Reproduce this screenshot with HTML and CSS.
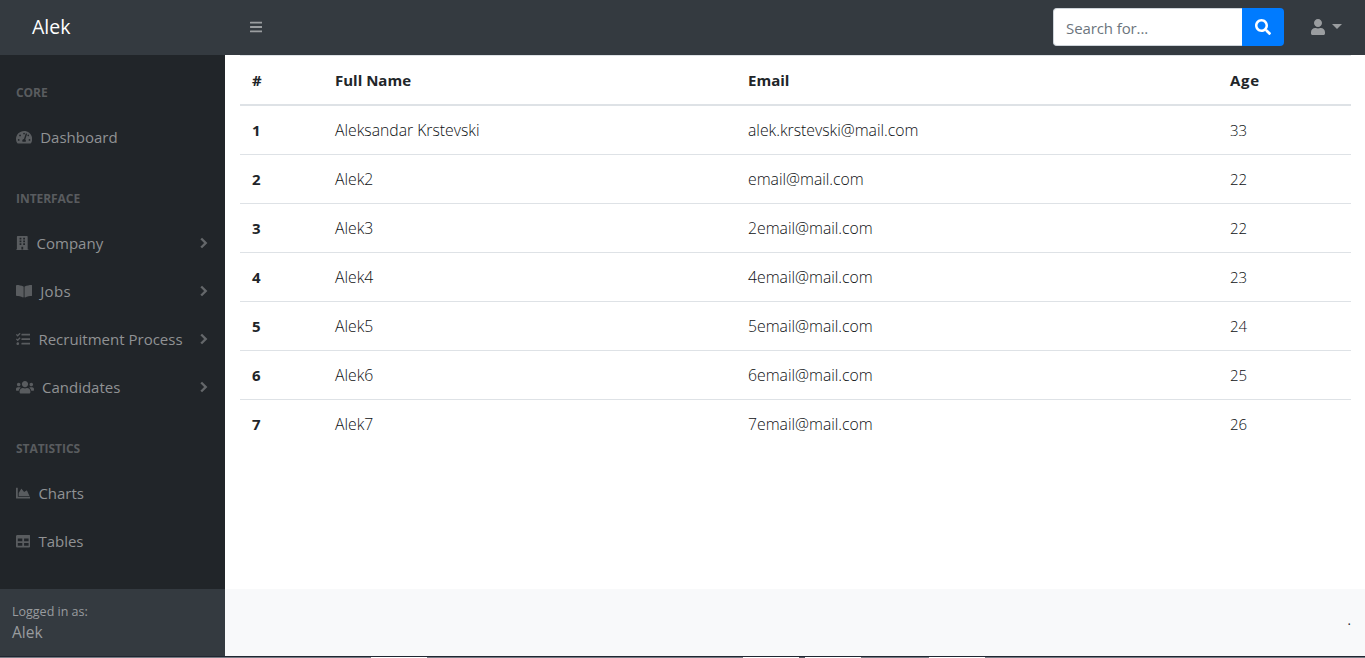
FILE: index.html
```html
<!DOCTYPE html>
<html lang="en">
<head>
<meta charset="utf-8">
<title>Alek</title>
<link rel="stylesheet" href="styles.css">
</head>
<body>
<nav class="topbar">
  <a class="brand">Alek</a>
  <button class="toggle" aria-label="Toggle sidebar"><svg class="icon" viewBox="0 0 448 512"><path d="M16 132h416c8.837 0 16-7.163 16-16V76c0-8.837-7.163-16-16-16H16C7.163 60 0 67.163 0 76v40c0 8.837 7.163 16 16 16zm0 160h416c8.837 0 16-7.163 16-16v-40c0-8.837-7.163-16-16-16H16c-8.837 0-16 7.163-16 16v40c0 8.837 7.163 16 16 16zm0 160h416c8.837 0 16-7.163 16-16v-40c0-8.837-7.163-16-16-16H16c-8.837 0-16 7.163-16 16v40c0 8.837 7.163 16 16 16z"/></svg></button>
  <form class="search">
    <div class="search-input"><span class="search-text">Search for...</span></div>
    <button type="button" class="search-button" aria-label="Search"><svg class="icon" viewBox="0 0 512 512"><path d="M505 442.700L405.300 343c-4.500-4.500-10.600-7-17-7H372c27.600-35.300 44-79.700 44-128C416 93.100 322.900 0 208 0S0 93.100 0 208s93.100 208 208 208c48.300 0 92.700-16.400 128-44v16.300c0 6.400 2.500 12.500 7 17l99.700 99.700c9.400 9.400 24.600 9.400 33.900 0l28.300-28.300c9.400-9.400 9.400-24.600.1-34zM208 336c-70.700 0-128-57.200-128-128 0-70.700 57.200-128 128-128 70.700 0 128 57.200 128 128 0 70.700-57.200 128-128 128z"/></svg></button>
  </form>
  <a class="user"><svg class="icon" viewBox="0 0 448 512"><path d="M224 256c70.700 0 128-57.300 128-128S294.700 0 224 0 96 57.300 96 128s57.300 128 128 128zm89.600 32h-16.700c-22.200 10.200-46.900 16-72.900 16s-50.600-5.800-72.900-16h-16.700C60.200 288 0 348.200 0 422.400V464c0 26.500 21.500 48 48 48h352c26.500 0 48-21.500 48-48v-41.600c0-74.200-60.200-134.400-134.400-134.400z"/></svg><span class="caret"></span></a>
</nav>
<div class="layout">
  <aside class="sidebar">
    <div class="menu">
      <div class="heading">Core</div>
      <a class="link"><svg class="icon" viewBox="0 0 576 512"><path d="M288 32C128.940 32 0 160.940 0 320c0 52.800 14.250 102.260 39.060 144.800 5.610 9.620 16.300 15.200 27.440 15.200h443c11.140 0 21.830-5.580 27.440-15.200C561.750 422.260 576 372.800 576 320c0-159.060-128.940-288-288-288zm0 64c14.710 0 26.580 10.130 30.320 23.650-1.110 2.260-2.640 4.230-3.450 6.670l-9.220 27.670c-5.130 3.490-10.970 6.010-17.640 6.010-17.670 0-32-14.330-32-32S270.330 96 288 96zM96 384c-17.670 0-32-14.330-32-32s14.330-32 32-32 32 14.330 32 32-14.330 32-32 32zm48-160c-17.670 0-32-14.330-32-32s14.330-32 32-32 32 14.330 32 32-14.330 32-32 32zm246.770-72.410l-61.330 184C343.130 347.330 352 364.540 352 384c0 11.720-3.380 22.550-8.880 32H232.880c-5.500-9.450-8.880-20.280-8.880-32 0-33.940 26.500-61.430 59.900-63.590l61.340-184.010c4.170-12.560 17.730-19.450 30.360-15.170 12.570 4.190 19.350 17.790 15.170 30.360zm14.660 57.200l15.520-46.550c3.470-1.290 7.130-2.230 11.050-2.230 17.670 0 32 14.330 32 32s-14.330 32-32 32c-11.380-.01-20.890-6.280-26.570-15.220zM480 384c-17.670 0-32-14.330-32-32s14.330-32 32-32 32 14.330 32 32-14.330 32-32 32z"/></svg><span>Dashboard</span></a>
      <div class="heading">Interface</div>
      <a class="link"><svg class="icon" viewBox="0 0 448 512"><path d="M436 480h-20V24c0-13.255-10.745-24-24-24H56C42.745 0 32 10.745 32 24v456H12c-6.627 0-12 5.373-12 12v20h448v-20c0-6.627-5.373-12-12-12zM128 76c0-6.627 5.373-12 12-12h40c6.627 0 12 5.373 12 12v40c0 6.627-5.373 12-12 12h-40c-6.627 0-12-5.373-12-12V76zm0 96c0-6.627 5.373-12 12-12h40c6.627 0 12 5.373 12 12v40c0 6.627-5.373 12-12 12h-40c-6.627 0-12-5.373-12-12v-40zm52 148h-40c-6.627 0-12-5.373-12-12v-40c0-6.627 5.373-12 12-12h40c6.627 0 12 5.373 12 12v40c0 6.627-5.373 12-12 12zm76 160h-64v-84c0-6.627 5.373-12 12-12h40c6.627 0 12 5.373 12 12v84zm64-172c0 6.627-5.373 12-12 12h-40c-6.627 0-12-5.373-12-12v-40c0-6.627 5.373-12 12-12h40c6.627 0 12 5.373 12 12v40zm0-96c0 6.627-5.373 12-12 12h-40c-6.627 0-12-5.373-12-12v-40c0-6.627 5.373-12 12-12h40c6.627 0 12 5.373 12 12v40zm0-96c0 6.627-5.373 12-12 12h-40c-6.627 0-12-5.373-12-12V76c0-6.627 5.373-12 12-12h40c6.627 0 12 5.373 12 12v40z"/></svg><span>Company</span><svg class="chevron" viewBox="0 0 10 12"><path d="M2.200 1.500 6.700 6l-4.500 4.500"/></svg></a>
      <a class="link"><svg class="icon" viewBox="0 0 576 512"><path d="M542.220 32.050c-54.800 3.110-163.720 14.430-230.960 55.590-4.640 2.840-7.270 7.890-7.270 13.170v363.870c0 11.550 12.630 18.850 23.280 13.490 69.180-34.820 169.230-44.320 218.700-46.920 16.890-.89 30.020-14.430 30.020-30.660V62.750c.01-17.710-15.350-31.740-33.770-30.700zM264.730 87.640C197.500 46.480 88.580 35.170 33.780 32.050 15.360 31.010 0 45.040 0 62.750V400.600c0 16.240 13.130 29.780 30.020 30.660 49.490 2.600 149.590 12.110 218.770 46.950 10.620 5.350 23.210-1.940 23.210-13.460V100.630c0-5.290-2.620-10.140-7.270-12.990z"/></svg><span class="jobs">Jobs</span><svg class="chevron" viewBox="0 0 10 12"><path d="M2.200 1.500 6.700 6l-4.500 4.500"/></svg></a>
      <a class="link"><svg class="icon" viewBox="0 0 512 512"><path d="M139.610 35.500a12 12 0 0 0-17 0L58.930 98.810l-22.700-22.120a12 12 0 0 0-17 0L3.530 92.410a12 12 0 0 0 0 17l47.590 47.400a12.780 12.780 0 0 0 17.610 0l15.590-15.620L156.520 69a12.090 12.090 0 0 0 .09-17zm0 159.190a12 12 0 0 0-17 0l-63.680 63.720-22.700-22.100a12 12 0 0 0-17 0L3.530 252a12 12 0 0 0 0 17L51 316.500a12.770 12.770 0 0 0 17.600 0l15.700-15.690 72.200-72.220a12 12 0 0 0 .09-16.900zM64 368c-26.490 0-48.590 21.500-48.590 48S37.530 464 64 464a48 48 0 0 0 0-96zm432 16H208a16 16 0 0 0-16 16v32a16 16 0 0 0 16 16h288a16 16 0 0 0 16-16v-32a16 16 0 0 0-16-16zm0-320H208a16 16 0 0 0-16 16v32a16 16 0 0 0 16 16h288a16 16 0 0 0 16-16V80a16 16 0 0 0-16-16zm0 160H208a16 16 0 0 0-16 16v32a16 16 0 0 0 16 16h288a16 16 0 0 0 16-16v-32a16 16 0 0 0-16-16z"/></svg><span>Recruitment Process</span><svg class="chevron" viewBox="0 0 10 12"><path d="M2.200 1.500 6.700 6l-4.500 4.500"/></svg></a>
      <a class="link"><svg class="icon" viewBox="0 0 640 512"><path d="M96 224c35.300 0 64-28.700 64-64s-28.700-64-64-64-64 28.700-64 64 28.700 64 64 64zm448 0c35.300 0 64-28.700 64-64s-28.700-64-64-64-64 28.700-64 64 28.700 64 64 64zm32 32h-64c-17.600 0-33.500 7.100-45.100 18.600 40.300 22.100 68.900 62 75.100 109.400h66c17.700 0 32-14.300 32-32v-32c0-35.300-28.700-64-64-64zm-256 0c61.900 0 112-50.100 112-112S381.900 32 320 32 208 82.100 208 144s50.100 112 112 112zm76.800 32h-8.300c-20.800 10-43.900 16-68.500 16s-47.600-6-68.500-16h-8.300C179.600 288 128 339.600 128 403.200V432c0 26.500 21.500 48 48 48h288c26.500 0 48-21.500 48-48v-28.800c0-63.600-51.600-115.200-115.200-115.200zm-223.700-13.400C161.500 263.100 145.600 256 128 256H64c-35.300 0-64 28.700-64 64v32c0 17.700 14.300 32 32 32h65.900c6.300-47.400 34.900-87.300 75.200-109.400z"/></svg><span>Candidates</span><svg class="chevron" viewBox="0 0 10 12"><path d="M2.200 1.500 6.700 6l-4.500 4.500"/></svg></a>
      <div class="heading">Statistics</div>
      <a class="link"><svg class="icon" viewBox="0 0 512 512"><path d="M500 384c6.600 0 12 5.400 12 12v40c0 6.600-5.400 12-12 12H12c-6.600 0-12-5.400-12-12V76c0-6.600 5.400-12 12-12h40c6.600 0 12 5.400 12 12v308h436zM372.700 159.500L288 216l-85.300-113.700c-5.100-6.800-15.500-6.300-19.900 1L96 248v104h384l-89.900-187.800c-3.200-6.500-11.400-8.700-17.400-4.700z"/></svg><span>Charts</span></a>
      <a class="link"><svg class="icon" viewBox="0 0 512 512"><path d="M464 32H48C21.490 32 0 53.490 0 80v352c0 26.510 21.490 48 48 48h416c26.510 0 48-21.490 48-48V80c0-26.510-21.490-48-48-48zM224 416H64v-96h160v96zm0-160H64v-96h160v96zm224 160H288v-96h160v96zm0-160H288v-96h160v96z"/></svg><span>Tables</span></a>
    </div>
    <div class="account"><div class="small">Logged in as:</div><div class="name">Alek</div></div>
  </aside>
  <div class="content">
    <main>
      <table>
        <colgroup><col class="c-num"><col class="c-name"><col class="c-email"><col class="c-age"></colgroup>
        <thead><tr><th>#</th><th>Full Name</th><th>Email</th><th>Age</th></tr></thead>
        <tbody>
          <tr><th>1</th><td>Aleksandar Krstevski</td><td>alek.krstevski@mail.com</td><td>33</td></tr>
          <tr><th>2</th><td>Alek2</td><td>email@mail.com</td><td>22</td></tr>
          <tr><th>3</th><td>Alek3</td><td>2email@mail.com</td><td>22</td></tr>
          <tr><th>4</th><td>Alek4</td><td>4email@mail.com</td><td>23</td></tr>
          <tr><th>5</th><td>Alek5</td><td>5email@mail.com</td><td>24</td></tr>
          <tr><th>6</th><td>Alek6</td><td>6email@mail.com</td><td>25</td></tr>
          <tr><th>7</th><td>Alek7</td><td>7email@mail.com</td><td>26</td></tr>
        </tbody>
      </table>
    </main>
    <footer>.</footer>
  </div>
</div>
<div class="taskbar"></div>
</body>
</html>
```
FILE: styles.css
```css
* { box-sizing: border-box; }
body {
  margin: 0;
  height: 658px;
  overflow: hidden;
  display: flex;
  flex-direction: column;
  font: 15px/24px "Open Sans", "Noto Sans", sans-serif;
  color: #212529;
  background: #fff;
}
button { border: 0; padding: 0; background: none; display: flex; align-items: center; justify-content: center; }
.icon { display: block; height: 1em; fill: currentColor; flex: none; }

.topbar { height: 55px; padding-bottom: 1px; flex: none; display: flex; align-items: center; background: #343a40; }
.brand { width: 225px; padding-left: 32px; color: #fff; font-size: 19.5px; line-height: 30px; }
.toggle { width: 62px; height: 31px; color: #9a9da0; font-size: 14px; }
.search { margin: 0 0 0 auto; display: flex; height: 38px; }
.search-input { width: 189px; padding: 7px 12px; border: 1px solid #ced4da; border-right: 0; border-radius: 4px 0 0 4px; background: #fff; color: #6c757d; }
.search-text { letter-spacing: -.1px; }
.search-button { width: 42px; background: #007bff; color: #fff; font-size: 16px; border-radius: 0 4px 4px 0; }
.user { width: 81px; padding-left: 27px; display: flex; align-items: center; color: #9a9da0; font-size: 16px; }
.caret { margin: -2px 0 0 7px; border: 5px solid transparent; border-top-color: currentColor; border-bottom: 0; }

.layout { flex: 1; min-height: 0; display: flex; }
.sidebar { width: 225px; flex: none; display: flex; flex-direction: column; background: #212529; color: #909294; }
.menu { flex: 1; }
.heading { padding: 29px 16px 11px; color: #595c5f; font-size: 12px; line-height: 18px; font-weight: 700; letter-spacing: -.05px; text-transform: uppercase; }
.link { height: 48px; padding: 0 16px; display: flex; align-items: center; }
.link .icon { height: 14.4px; margin-right: 8px; color: #595c5f; }
.jobs { letter-spacing: .4px; }
.chevron { width: 10px; height: 12px; margin-left: auto; fill: none; stroke: #64676a; stroke-width: 2.4; }
.account { height: 67px; padding: 13px 12px 11px; background: #343a40; color: #999c9f; }
.small { font-size: 12.5px; line-height: 20px; }
.name { font-size: 15.5px; line-height: 21px; }

.content { flex: 1; display: flex; flex-direction: column; }
main { flex: 1; padding: 0 14px 0 15px; }
table { width: 100%; table-layout: fixed; border-collapse: separate; border-spacing: 0; }
.c-num { width: 83px; }
.c-name { width: 413px; }
.c-email { width: 482px; }
th, td { height: 49px; padding: 0 12px; text-align: left; border-bottom: 1px solid #dee2e6; }
th { font-weight: 700; }
td { font-weight: 300; font-size: 15.75px; color: #0c0f12; }
td:last-child { font-size: 15px; }
thead th { height: 51px; border-top: 1px solid #dee2e6; border-bottom-width: 2px; }
thead th:last-child { letter-spacing: .7px; }
tbody tr:last-child > * { border-bottom-color: transparent; }
footer { height: 67px; padding: 21px 14px 0; text-align: right; background: #f8f9fa; font-size: 13px; line-height: 20px; }
.taskbar {
  height: 2px;
  flex: none;
  border-top: 1px solid #202631;
  background: linear-gradient(90deg, #777b84 371px, #fff 371px 427px, #777b84 427px 743px, #fff 743px 799px, #555962 799px 805px, #fff 805px 861px, #777b84 861px 929px, #fff 929px 985px, #777b84 985px);
}
```
